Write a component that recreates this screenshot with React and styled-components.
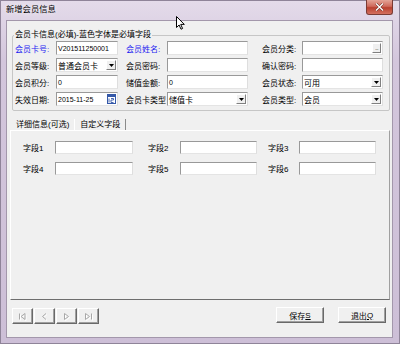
import { Fragment } from "react";
import styled, { createGlobalStyle } from "styled-components";

const GlobalStyle = createGlobalStyle`
  html, body { margin: 0; padding: 0; }
  body {
    width: 400px;
    height: 344px;
    overflow: hidden;
    font-family: "Liberation Sans", "Noto Sans CJK SC", sans-serif;
    font-size: 8px;
    color: #000;
  }
  * { box-sizing: border-box; }
`;

const Window = styled.div`
  position: relative;
  width: 400px;
  height: 344px;
  display: flex;
  flex-direction: column;
  background: linear-gradient(#e4dbea, #d3c6dc 60px, #cdbfd7);
  border: 1px solid #8f8499;
`;

const TitleBar = styled.div`
  height: 19px;
  display: flex;
  align-items: flex-start;
  padding-left: 5px;
`;

const Title = styled.div`
  line-height: 17px;
  font-size: 8.3px;
  text-shadow: 0 0 4px rgba(255, 255, 255, 0.9);
`;

const CloseButton = styled.div`
  margin-left: auto;
  margin-right: 6px;
  margin-top: -1px;
  width: 27px;
  height: 15px;
  display: flex;
  align-items: center;
  justify-content: center;
  border: 1px solid #7b3b34;
  border-top: none;
  border-radius: 0 0 3px 3px;
  background: linear-gradient(#e3a497, #cf6a5c 45%, #b9402f 55%, #d4705f);
`;

const Client = styled.div`
  flex: 1;
  display: flex;
  flex-direction: column;
  margin: 0 6px 5px 5px;
  border: 1px solid #a397ab;
  background: #f0f0f0;
`;

const GroupBox = styled.fieldset`
  margin: 9px 2px 0 5px;
  min-width: 0;
  padding: 1px 0 4px 1px;
  border: 1px solid #c6c6c6;
  border-radius: 2px;
`;

const Legend = styled.legend`
  padding: 0 1px;
  line-height: 10px;
`;

const FormGrid = styled.div`
  display: grid;
  grid-template-columns: 41px 62px 49px 81px 54px 81px;
  grid-auto-rows: 14px;
  row-gap: 3px;
  padding-left: 1px;
`;

const FieldGrid = styled.div`
  display: grid;
  grid-template-columns: 32px 78px 47px 77px 42px 77px;
  grid-auto-rows: 13px;
  row-gap: 8px;
`;

const Label = styled.div`
  display: flex;
  align-items: center;
  padding-left: ${(p) => p.$indent || 0}px;
  color: ${(p) => (p.$required ? "#1c1cf0" : "#000")};
  white-space: nowrap;
`;

const TextBox = styled.div`
  display: flex;
  align-items: center;
  justify-content: space-between;
  height: 100%;
  padding: 0 1px 0 1px;
  background: #fff;
  border: 1px solid;
  border-color: #999 #dedede #e4e4e4 #999;
  white-space: nowrap;
  overflow: hidden;
`;

const Num = styled.span`
  font-size: 7px;
`;

const DropButton = styled.div`
  width: 10px;
  height: 10px;
  display: flex;
  align-items: center;
  justify-content: center;
  background: #f0f0f0;
  border: 1px solid;
  border-color: #fff #808080 #808080 #fff;
`;

const MoreButton = styled(DropButton)`
  width: 9px;
  font-size: 6px;
  line-height: 6px;
  letter-spacing: -0.6px;
  color: #333;
`;

const TabStrip = styled.div`
  display: flex;
  height: 11px;
  margin: 8px 2px 0 3px;
  padding-left: 1px;
`;

const Tab = styled.div`
  padding: 0 ${(p) => (p.$active ? 5 : 4)}px;
  line-height: 11px;
  white-space: nowrap;
  border-right: 1px solid ${(p) => (p.$active ? "#8a8a8a" : "transparent")};
  border-left: 1px solid ${(p) => (p.$active ? "#fff" : "transparent")};
`;

const Panel = styled.div`
  flex: 1;
  margin: 0 2px 0 3px;
  padding: 10px 0 0 12px;
  border: 1px solid;
  border-color: #fff #a0a0a0 #6d6d6d #fff;
`;

const Footer = styled.div`
  height: 37px;
  display: flex;
  align-items: flex-start;
  padding: 6px 6px 0 5px;
`;

const NavGroup = styled.div`
  display: flex;
  gap: 1px;
  margin-top: 1px;
`;

const Button = styled.div`
  width: ${(p) => p.$width || 48}px;
  height: 16px;
  margin-top: 1px;
  margin-left: ${(p) => (p.$push ? "auto" : `${p.$gap || 0}px`)};
  display: flex;
  align-items: center;
  justify-content: center;
  background: #f0f0f0;
  border: 1px solid;
  border-color: #fff #696969 #696969 #fff;
  box-shadow: inset -1px -1px 0 #a0a0a0;
  color: ${(p) => (p.$disabled ? "#a0a0a0" : "#000")};
`;

const Cursor = styled.svg`
  position: absolute;
  left: 175px;
  top: 15px;
`;

const Arrow = () => (
  <svg width="5" height="3" viewBox="0 0 5 3">
    <path d="M0 0h5L2.5 3z" fill="#000" />
  </svg>
);

const CalendarIcon = () => (
  <svg width="9" height="10" viewBox="0 0 9 10">
    <rect x="0.5" y="0.5" width="8" height="9" fill="#fff" stroke="#3458a8" />
    <rect x="0" y="0" width="9" height="3" fill="#3458a8" />
    <path d="M2 4.5v4M4 4.5h2.5v1.5h-2.5v2.5h2.5" stroke="#3458a8" fill="none" strokeWidth="0.9" />
  </svg>
);

const NavIcon = ({ kind }) => {
  const c = "#a8a8a8";
  const paths = {
    first: "M2.5 1.5v6M8 1.5L4 4.5l4 3z",
    prev: "M7 1.5L3.5 4.5 7 7.5",
    next: "M3.5 1.5L7.5 4.5 3.5 7.5z",
    last: "M8.5 1.5v6M2.5 1.5l4 3-4 3z",
  };
  return (
    <svg width="11" height="9" viewBox="0 0 11 9">
      <path d={paths[kind]} fill="none" stroke="#fff" transform="translate(1 1)" />
      <path d={paths[kind]} fill="none" stroke={c} />
    </svg>
  );
};

const Select = ({ value }) => (
  <TextBox>
    <span>{value}</span>
    <DropButton>
      <Arrow />
    </DropButton>
  </TextBox>
);

const customFields = ["字段1", "字段2", "字段3", "字段4", "字段5", "字段6"];
const fieldIndent = [0, 15, 11];

export default function App() {
  return (
    <Window>
      <GlobalStyle />
      <TitleBar>
        <Title>新增会员信息</Title>
        <CloseButton>
          <svg width="9" height="8" viewBox="0 0 9 8">
            <path d="M1 0.5l7 7M8 0.5l-7 7" stroke="#6b2a22" strokeWidth="2.4" />
            <path d="M1 0.5l7 7M8 0.5l-7 7" stroke="#fff" strokeWidth="1.4" />
          </svg>
        </CloseButton>
      </TitleBar>

      <Client>
        <GroupBox>
          <Legend>会员卡信息(必填)-蓝色字体是必填字段</Legend>
          <FormGrid>
            <Label $required>会员卡号:</Label>
            <TextBox>
              <Num>V201511250001</Num>
            </TextBox>
            <Label $required $indent={8}>会员姓名:</Label>
            <TextBox />
            <Label $indent={14}>会员分类:</Label>
            <TextBox>
              <span />
              <MoreButton>...</MoreButton>
            </TextBox>

            <Label>会员等级:</Label>
            <Select value="普通会员卡" />
            <Label $indent={8}>会员密码:</Label>
            <TextBox />
            <Label $indent={14}>确认密码:</Label>
            <TextBox />

            <Label>会员积分:</Label>
            <TextBox>
              <Num>0</Num>
            </TextBox>
            <Label $indent={8}>储值金额:</Label>
            <TextBox>
              <Num>0</Num>
            </TextBox>
            <Label $indent={14}>会员状态:</Label>
            <Select value="可用" />

            <Label>失效日期:</Label>
            <TextBox>
              <Num>2015-11-25</Num>
              <CalendarIcon />
            </TextBox>
            <Label $indent={8}>会员卡类型</Label>
            <Select value="储值卡" />
            <Label $indent={14}>会员类型:</Label>
            <Select value="会员" />
          </FormGrid>
        </GroupBox>

        <TabStrip>
          <Tab>详细信息(可选)</Tab>
          <Tab $active>自定义字段</Tab>
        </TabStrip>
        <Panel>
          <FieldGrid>
            {customFields.map((name, i) => (
              <Fragment key={name}>
                <Label $indent={fieldIndent[i % 3]}>{name}</Label>
                <TextBox />
              </Fragment>
            ))}
          </FieldGrid>
        </Panel>

        <Footer>
          <NavGroup>
            {["first", "prev", "next", "last"].map((k) => (
              <Button key={k} $width={21} $disabled>
                <NavIcon kind={k} />
              </Button>
            ))}
          </NavGroup>
          <Button $push>
            保存<u>S</u>
          </Button>
          <Button $gap={14}>
            退出<u>Q</u>
          </Button>
        </Footer>
      </Client>

      <Cursor width="9" height="14" viewBox="0 0 9 14">
        <path d="M0.5 0.5v11l2.6-2.5 1.9 4.2 1.6-.7-1.9-4.1h3.6z" fill="#fff" stroke="#000" strokeLinejoin="round" />
      </Cursor>
    </Window>
  );
}
